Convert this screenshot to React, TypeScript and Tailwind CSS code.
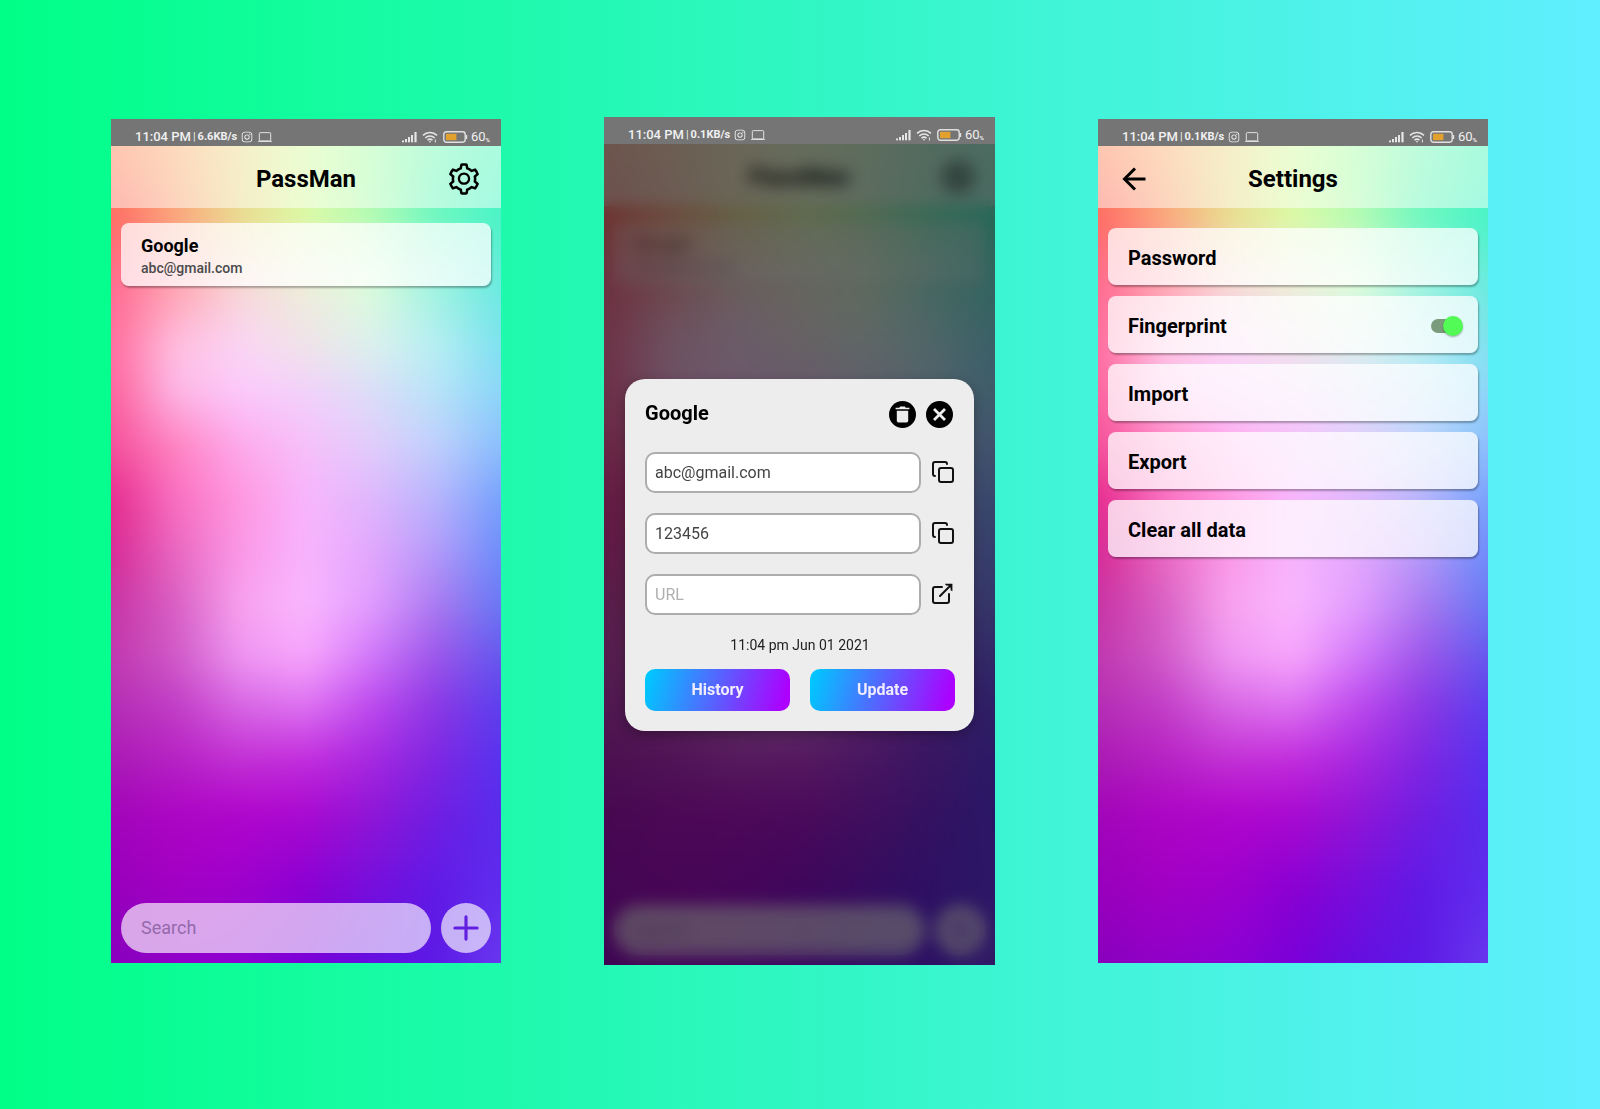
import { useId, type ReactNode } from "react";
import { Copy, Plus, ArrowLeft } from "lucide-react";
import { AiOutlineSetting } from "react-icons/ai";
import { IoLogoInstagram, IoLaptopOutline } from "react-icons/io5";

/* Wallpaper: colours on a grid, blended smoothly in both directions. */
const WALLPAPER: { y: number; colors: string[] }[] = [
  { y: 0, colors: ["#ff9360", "#fbb878", "#eddf92", "#d8fba4", "#b0feac", "#7cf8b6", "#54f8be"] },
  { y: 58, colors: ["#fb8060", "#fab07c", "#ebde92", "#d6fba4", "#acfdae", "#74f7ba", "#4ff7c1"] },
  { y: 95, colors: ["#ff6a62", "#fba57a", "#e9dd8c", "#dcfaa4", "#b4fbb2", "#6cf8c0", "#48f4c6"] },
  { y: 168, colors: ["#ff6a90", "#ffa4b4", "#f8d8d8", "#eeeedc", "#dcfcdc", "#a0f3e0", "#6aeae0"] },
  { y: 231, colors: ["#ff6c9e", "#ffc0e2", "#fad4f6", "#f0e2ea", "#dcefee", "#b8eef4", "#7ee0f0"] },
  { y: 271, colors: ["#fd629c", "#fdb8e6", "#fccafc", "#f2d2fa", "#dcdef8", "#b8e4f8", "#8ad6f8"] },
  { y: 326, colors: ["#f4509a", "#ff84c2", "#fdaaec", "#f6c0fa", "#e2cdfb", "#c0d0fc", "#8abefc"] },
  { y: 377, colors: ["#e62c8e", "#fa70c0", "#ff98e0", "#f8b6fc", "#dfb8fc", "#b8b6fc", "#76a2fc"] },
  { y: 430, colors: ["#d82a94", "#ea68c0", "#fb98e6", "#f8b4fe", "#e2a8fc", "#b49cfa", "#6c8efa"] },
  { y: 485, colors: ["#c834a4", "#d860c4", "#f8a2ee", "#f9b8fe", "#e29cfe", "#aa7af0", "#6878f4"] },
  { y: 537, colors: ["#c038ae", "#d05ac8", "#ee96f2", "#f8a6fc", "#d278fa", "#9c56ea", "#6458ee"] },
  { y: 586, colors: ["#b42eb4", "#c23ec6", "#d868e4", "#de74f2", "#be4aee", "#8c38e4", "#5c40ee"] },
  { y: 641, colors: ["#aa1ab4", "#b622c4", "#c230d4", "#c22cdc", "#a628e0", "#7e26e2", "#5832ee"] },
  { y: 694, colors: ["#a206b8", "#ac06c4", "#b006cc", "#aa0ad0", "#9016d6", "#701ee2", "#582cec"] },
  { y: 768, colors: ["#9800bc", "#a200c4", "#9e00cc", "#8a00d2", "#760edc", "#601ae6", "#602cee"] },
  { y: 844, colors: ["#8800bc", "#9000c8", "#8c00d2", "#7a00d8", "#640fe0", "#5c1ae6", "#6a38ee"] },
];

function Wallpaper() {
  const id = useId();
  return (
    <svg
      className="absolute inset-0 h-full w-full"
      viewBox="0 0 390 844"
      preserveAspectRatio="none"
      aria-hidden="true"
    >
      <defs>
        {WALLPAPER.map((row, i) => (
          <linearGradient
            key={`c${i}`}
            id={`${id}c${i}`}
            gradientUnits="userSpaceOnUse"
            x1="0"
            x2="390"
            y1="0"
            y2="0"
          >
            {row.colors.map((color, j) => (
              <stop key={j} offset={j / 6} stopColor={color} />
            ))}
          </linearGradient>
        ))}
        {WALLPAPER.slice(1).map((row, i) => (
          <linearGradient
            key={`f${i}`}
            id={`${id}f${i + 1}`}
            gradientUnits="userSpaceOnUse"
            x1="0"
            x2="0"
            y1={WALLPAPER[i].y}
            y2={row.y}
          >
            <stop offset="0" stopColor="#fff" stopOpacity="0" />
            <stop offset="1" stopColor="#fff" stopOpacity="1" />
          </linearGradient>
        ))}
        {WALLPAPER.slice(1).map((_, i) => (
          <mask
            key={`m${i}`}
            id={`${id}m${i + 1}`}
            maskUnits="userSpaceOnUse"
            x="-60"
            y="-60"
            width="510"
            height="964"
            style={{ maskType: "alpha" }}
          >
            <rect x="-60" y="-60" width="510" height="964" fill={`url(#${id}f${i + 1})`} />
          </mask>
        ))}
        <filter
          id={`${id}b`}
          x="-20%"
          y="-10%"
          width="140%"
          height="120%"
          colorInterpolationFilters="sRGB"
        >
          <feGaussianBlur stdDeviation="12" />
        </filter>
      </defs>
      <g filter={`url(#${id}b)`}>
        {WALLPAPER.map((_, i) => (
          <rect
            key={i}
            x="-50"
            y="-50"
            width="490"
            height="944"
            fill={`url(#${id}c${i})`}
            mask={i ? `url(#${id}m${i})` : undefined}
          />
        ))}
      </g>
    </svg>
  );
}

function SignalIcon() {
  return (
    <svg width="16" height="12" viewBox="0 0 16 12" fill="#e6e6e6" aria-hidden="true">
      <rect x="0" y="9.5" width="2" height="1.8" />
      <rect x="3" y="8" width="2" height="3.3" />
      <rect x="6" y="6" width="2" height="5.3" />
      <rect x="9" y="4" width="2" height="7.3" />
      <rect x="12.4" y="1" width="2.2" height="10.3" />
    </svg>
  );
}

function WifiIcon() {
  return (
    <svg width="16" height="12" viewBox="0 0 16 12" fill="none" stroke="#e6e6e6" strokeWidth="1.5" aria-hidden="true">
      <path d="M1 4.4a10 10 0 0 1 14 0" />
      <path d="M3.3 7a6.8 6.8 0 0 1 9.4 0" />
      <path d="M5.5 9.3a3.6 3.6 0 0 1 5 0" />
      <path d="M6.8 10.4 8 11.7l1.2-1.3a2 2 0 0 0-2.4 0Z" fill="#e6e6e6" stroke="none" />
      <path d="M13.4 8.5v3" strokeWidth="1" />
    </svg>
  );
}

function BatteryIcon() {
  return (
    <svg width="25" height="12" viewBox="0 0 25 12" aria-hidden="true">
      <rect x="0.8" y="0.8" width="21.4" height="10.4" rx="2.6" fill="none" stroke="#e0e0e0" strokeWidth="1.4" />
      <rect x="3" y="2.8" width="10.4" height="6.4" fill="#e2a02e" />
      <path d="M23.4 4v4" stroke="#e0e0e0" strokeWidth="1.6" />
    </svg>
  );
}

function StatusBar({ rate }: { rate: string }) {
  return (
    <div className="relative flex h-[27px] items-end justify-between bg-[#757575] pr-[11px] pb-[2px] pl-6 text-[#f0f0f0]">
      <div className="flex items-center">
        <span className="text-[13px] leading-[14px] font-medium">11:04 PM</span>
        <span className="px-[2px] text-[11px] leading-[14px]">|</span>
        <span className="text-[11px] leading-[14px] font-bold">{rate}</span>
        <IoLogoInstagram className="ml-1 size-3" aria-hidden="true" />
        <IoLaptopOutline className="ml-[5px] size-[14px]" aria-hidden="true" />
      </div>
      <div className="flex items-center">
        <SignalIcon />
        <span className="ml-1 flex">
          <WifiIcon />
        </span>
        <span className="ml-[5px] flex">
          <BatteryIcon />
        </span>
        <span className="ml-[3px] text-[13px] leading-[14px]">60</span>
        <span className="self-end text-[6px] leading-[8px] font-bold">%</span>
      </div>
    </div>
  );
}

function Header({ title, left, right }: { title: string; left?: ReactNode; right?: ReactNode }) {
  return (
    <header className="grid h-[62px] grid-cols-[1fr_auto_1fr] items-center bg-white/50 px-[19px] pt-[3px]">
      <div className="flex">{left}</div>
      <h1 className="text-2xl font-bold">{title}</h1>
      <div className="flex justify-end">{right}</div>
    </header>
  );
}

const CARD = "rounded-lg bg-white/75 shadow-[1px_2px_2px_rgba(0,0,0,0.3)]";

function HomeScreen({ dimmed }: { dimmed?: boolean }) {
  return (
    <div className="relative flex flex-1 flex-col" inert={dimmed}>
      <Header
        title="PassMan"
        right={
          <button type="button" aria-label="Settings">
            <AiOutlineSetting size={36} />
          </button>
        }
      />
      <div className={`flex-1 px-[10px] pt-[15px] ${dimmed ? "opacity-40" : ""}`}>
        <button type="button" className={`flex h-[63px] w-full flex-col justify-center px-5 pt-[2px] text-left ${CARD}`}>
          <span className="text-lg leading-6 font-bold">Google</span>
          <span className="text-sm leading-5 font-medium text-[#4a4a4a]">abc@gmail.com</span>
        </button>
      </div>
      <div className="flex items-center gap-[10px] px-[10px] pb-[10px]">
        <input
          type="search"
          aria-label="Search"
          placeholder="Search"
          className="h-[50px] min-w-0 flex-1 rounded-full bg-white/65 px-5 pb-px text-lg outline-none placeholder:text-[#946aab]"
        />
        <button
          type="button"
          aria-label="Add password"
          className="flex size-[50px] items-center justify-center rounded-full bg-white/65 text-[#601fe0]"
        >
          <Plus size={38} strokeWidth={2} />
        </button>
      </div>
    </div>
  );
}

function TrashCircle() {
  return (
    <svg width="27" height="27" viewBox="0 0 27 27" aria-hidden="true">
      <circle cx="13.5" cy="13.5" r="13.5" fill="#000" />
      <path d="M6.6 8.3V6.7h3.6l1-1.2h4.6l1 1.2h3.6v1.6Z" fill="#ededed" />
      <path d="M7.8 9.7h11.4v10a1.8 1.8 0 0 1-1.8 1.8H9.6a1.8 1.8 0 0 1-1.8-1.8Z" fill="#ededed" />
    </svg>
  );
}

function CloseCircle() {
  return (
    <svg width="27" height="27" viewBox="0 0 27 27" aria-hidden="true">
      <circle cx="13.5" cy="13.5" r="13.5" fill="#000" />
      <path d="m8 8 11 11M19 8 8 19" stroke="#ededed" strokeWidth="2.8" />
    </svg>
  );
}

function OpenIcon() {
  return (
    <svg width="24" height="24" viewBox="0 0 24 24" fill="none" stroke="#111" strokeWidth="2" aria-hidden="true">
      <path d="M11 5H4a2 2 0 0 0-2 2v12a2 2 0 0 0 2 2h12a2 2 0 0 0 2-2v-7" strokeLinecap="round" />
      <path d="M9 14 19 4" strokeLinecap="round" />
      <path d="M14 1.8h7.4v7.4l-1.8-1V3.6H15Z" fill="#111" stroke="none" />
      <path d="M16.5 2.5h4.2v4.2Z" fill="#111" stroke="none" />
    </svg>
  );
}

function Field(props: { label: string; value?: string; placeholder?: string; action: string; icon: ReactNode }) {
  return (
    <div className="flex items-center justify-between gap-[10px]">
      <input
        aria-label={props.label}
        defaultValue={props.value}
        placeholder={props.placeholder}
        className="h-[41px] min-w-0 flex-1 rounded-[10px] border-2 border-[#adadad] bg-white px-2 text-base text-[#444] outline-none placeholder:text-[#b0b0b0]"
      />
      <button type="button" aria-label={props.action} className="text-[#111]">
        {props.icon}
      </button>
    </div>
  );
}

const GRADIENT_BUTTON =
  "h-[42px] rounded-[10px] bg-[linear-gradient(105deg,#00c6ff_3%,#ad00ff_95%)] pt-px text-base font-bold text-[#f0ecff]";

function EntryDialog() {
  return (
    <div
      role="dialog"
      aria-label="Google"
      className="flex w-full flex-col rounded-[20px] bg-[#ededed] pt-[22px] pr-[19px] pb-5 pl-5 shadow-[0_4px_12px_rgba(0,0,0,0.3)]"
    >
      <div className="flex items-start justify-between">
        <h2 className="text-xl leading-6 font-bold">Google</h2>
        <div className="flex gap-[10px] pr-[2px]">
          <button type="button" aria-label="Delete">
            <TrashCircle />
          </button>
          <button type="button" aria-label="Close">
            <CloseCircle />
          </button>
        </div>
      </div>
      <div className="mt-6 flex flex-col gap-5">
        <Field label="Login" value="abc@gmail.com" action="Copy login" icon={<Copy size={24} />} />
        <Field label="Password" value="123456" action="Copy password" icon={<Copy size={24} />} />
        <Field label="URL" placeholder="URL" action="Open URL" icon={<OpenIcon />} />
      </div>
      <p className="mt-5 text-center text-sm leading-5 text-[#222]">11:04 pm Jun 01 2021</p>
      <div className="mt-[14px] grid grid-cols-2 gap-5">
        <button type="button" className={GRADIENT_BUTTON}>
          History
        </button>
        <button type="button" className={GRADIENT_BUTTON}>
          Update
        </button>
      </div>
    </div>
  );
}

const ROW = `flex h-[57px] w-full items-center justify-between pt-[2px] pr-[15px] pl-5 text-left text-xl font-bold ${CARD}`;

function SettingsScreen() {
  return (
    <div className="relative flex flex-1 flex-col">
      <Header
        title="Settings"
        left={
          <button type="button" aria-label="Back">
            <ArrowLeft size={36} strokeWidth={2} strokeLinecap="butt" strokeLinejoin="miter" />
          </button>
        }
      />
      <div className="flex flex-col gap-[11px] px-[10px] pt-5">
        <button type="button" className={ROW}>
          Password
        </button>
        <label className={ROW}>
          Fingerprint
          <span className="relative flex w-8 items-center">
            <input type="checkbox" role="switch" defaultChecked className="peer sr-only" />
            <span className="h-[14px] w-7 rounded-full bg-[#7a9c7c]" />
            <span className="absolute right-0 size-5 rounded-full bg-[#52fb56] shadow-[0_1px_2px_rgba(0,0,0,0.35)]" />
          </span>
        </label>
        <button type="button" className={ROW}>
          Import
        </button>
        <button type="button" className={ROW}>
          Export
        </button>
        <button type="button" className={ROW}>
          Clear all data
        </button>
      </div>
    </div>
  );
}

function Phone({ rate, tall, children }: { rate: string; tall?: boolean; children: ReactNode }) {
  return (
    <section className={`relative flex flex-col overflow-hidden ${tall ? "min-h-[848px]" : "min-h-[844px]"}`}>
      <Wallpaper />
      <StatusBar rate={rate} />
      {children}
    </section>
  );
}

export default function App() {
  return (
    <main className="grid min-h-screen grid-cols-[390fr_391fr_390fr] content-start items-center gap-[103px] bg-[linear-gradient(90deg,#00ff87,#60efff)] pt-[117px] pr-[112px] pb-36 pl-[111px] font-[Roboto,sans-serif] text-black">
      <Phone rate="6.6KB/s">
        <HomeScreen />
      </Phone>
      <Phone rate="0.1KB/s" tall>
        <div className="relative flex flex-1">
          <HomeScreen dimmed />
          <div className="absolute inset-0 flex items-center justify-center bg-[#0c0a0c]/60 px-[21px] backdrop-blur-[8px]">
            <EntryDialog />
          </div>
        </div>
      </Phone>
      <Phone rate="0.1KB/s">
        <SettingsScreen />
      </Phone>
    </main>
  );
}
